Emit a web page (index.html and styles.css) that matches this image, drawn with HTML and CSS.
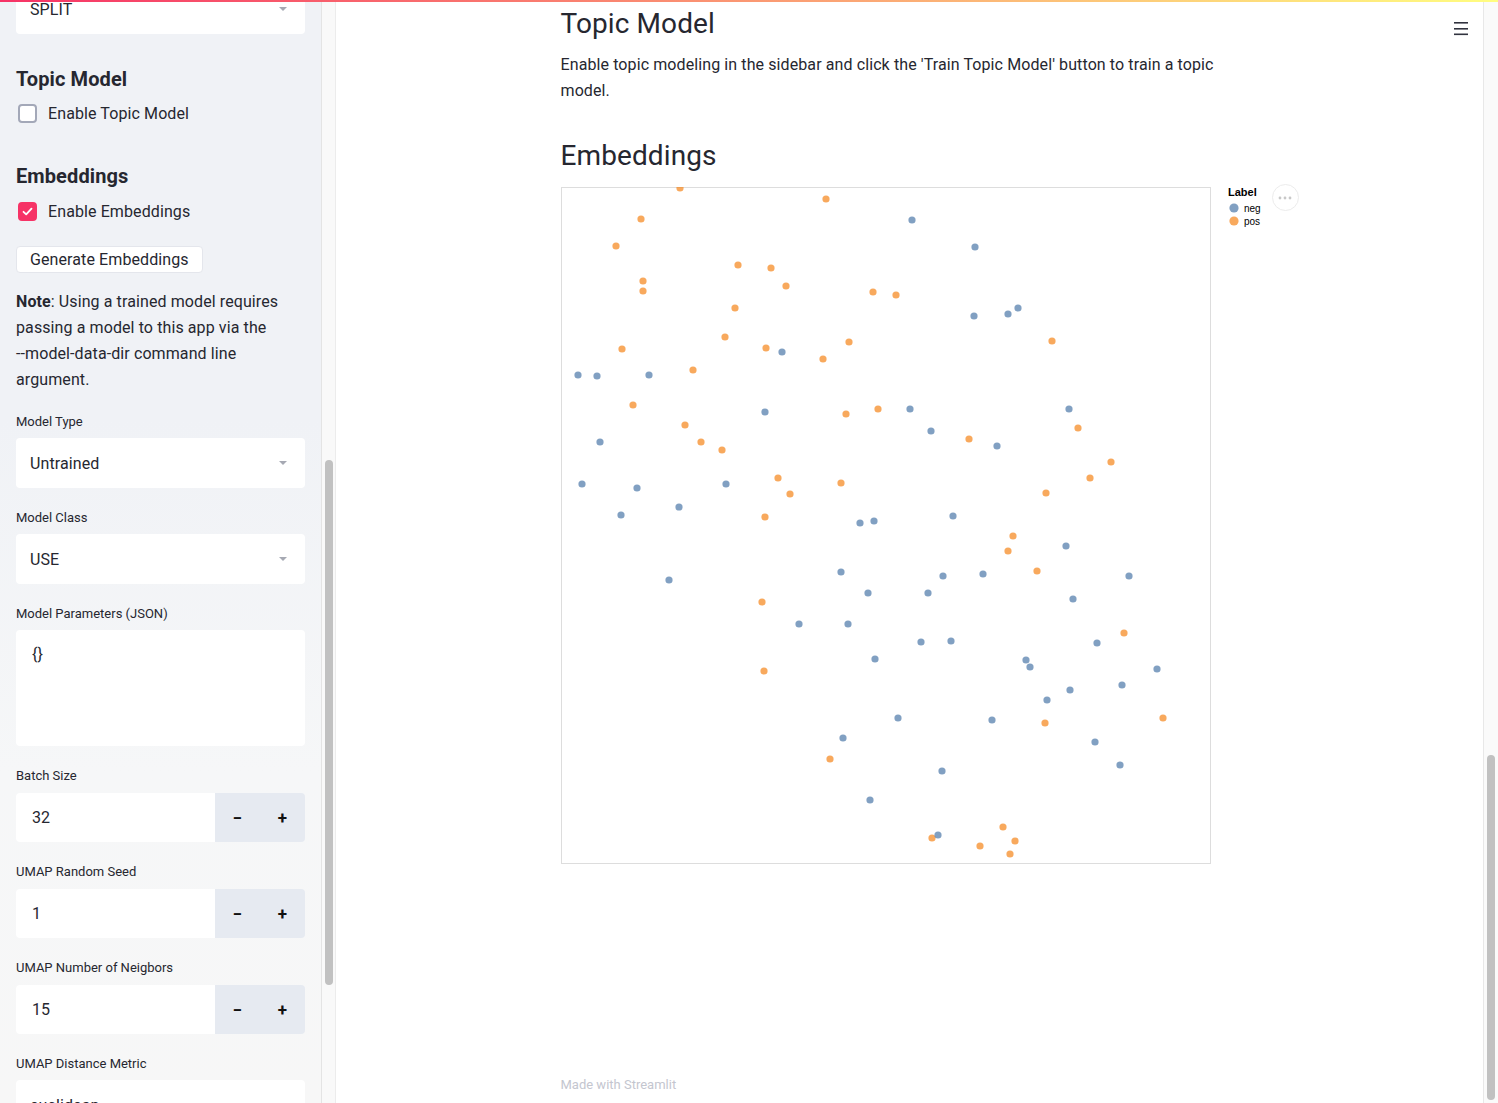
FILE: index.html
```html
<!DOCTYPE html>
<html>
<head>
<meta charset="utf-8">
<link rel="stylesheet" href="styles.css">
</head>
<body>
<div class="topbar"></div>
<aside class="sidebar">
  <div class="sidebar-content">
    <div class="sb-inner">
      <div class="select"><span>SPLIT</span><span class="caret"></span></div>

      <h3 class="sb-h3 first-h3">Topic Model</h3>
      <div class="check-row"><span class="box"></span><span>Enable Topic Model</span></div>

      <h3 class="sb-h3 second-h3">Embeddings</h3>
      <div class="check-row checked-row"><span class="box checked"><svg width="13" height="13" viewBox="0 0 13 13"><path d="M2.5 6.8 L5.2 9.4 L10.5 3.6" fill="none" stroke="#fff" stroke-width="1.8" stroke-linecap="round" stroke-linejoin="round"/></svg></span><span>Enable Embeddings</span></div>

      <div class="btn-row"><button class="btn">Generate Embeddings</button></div>

      <p class="note"><strong>Note</strong>: Using a trained model requires passing a model to this app via the <span class="nowrap">--model-data-dir</span> command line argument.</p>

      <div class="label first-label">Model Type</div>
      <div class="select"><span>Untrained</span><span class="caret"></span></div>

      <div class="label">Model Class</div>
      <div class="select"><span>USE</span><span class="caret"></span></div>

      <div class="label">Model Parameters (JSON)</div>
      <div class="textarea">{}</div>

      <div class="label num-label">Batch Size</div>
      <div class="number"><div class="num-field">32</div><div class="num-steps"><span>&minus;</span><span>+</span></div></div>

      <div class="label num-label">UMAP Random Seed</div>
      <div class="number"><div class="num-field">1</div><div class="num-steps"><span>&minus;</span><span>+</span></div></div>

      <div class="label num-label">UMAP Number of Neigbors</div>
      <div class="number"><div class="num-field">15</div><div class="num-steps"><span>&minus;</span><span>+</span></div></div>

      <div class="label">UMAP Distance Metric</div>
      <div class="select"><span>euclidean</span><span class="caret"></span></div>
    </div>
  </div>
  <div class="sb-track"><div class="sb-thumb"></div></div>
</aside>

<main class="main">
  <div class="hamburger">
    <svg width="16" height="16" viewBox="0 0 16 16"><g stroke="#31333f" stroke-width="1.6"><line x1="1" y1="2.8" x2="15" y2="2.8"/><line x1="1" y1="8.8" x2="15" y2="8.8"/><line x1="1" y1="14.3" x2="15" y2="14.3"/></g></svg>
  </div>
  <div class="block">
    <h2 class="h2 title">Topic Model</h2>
    <p class="para">Enable topic modeling in the sidebar and click the 'Train Topic Model' button to train a topic model.</p>
    <h2 class="h2 emb">Embeddings</h2>
    <div class="chart-wrap">
      <svg class="chart" width="745" height="678" viewBox="0 0 745 678">
        <rect x="0.5" y="0.5" width="649" height="676" fill="#fff" stroke="#dddddd"/>
        <g fill="#f58518" fill-opacity="0.7">
          <circle cx="119" cy="1" r="3.6"/><circle cx="265" cy="12" r="3.6"/><circle cx="80" cy="32" r="3.6"/><circle cx="55" cy="59" r="3.6"/>
          <circle cx="177" cy="78" r="3.6"/><circle cx="210" cy="81" r="3.6"/><circle cx="82" cy="94" r="3.6"/><circle cx="82" cy="104" r="3.6"/>
          <circle cx="225" cy="99" r="3.6"/><circle cx="312" cy="105" r="3.6"/><circle cx="335" cy="108" r="3.6"/><circle cx="174" cy="121" r="3.6"/>
          <circle cx="164" cy="150" r="3.6"/><circle cx="61" cy="162" r="3.6"/><circle cx="205" cy="161" r="3.6"/><circle cx="288" cy="155" r="3.6"/>
          <circle cx="262" cy="172" r="3.6"/><circle cx="491" cy="154" r="3.6"/><circle cx="132" cy="183" r="3.6"/><circle cx="72" cy="218" r="3.6"/>
          <circle cx="285" cy="227" r="3.6"/><circle cx="317" cy="222" r="3.6"/><circle cx="124" cy="238" r="3.6"/><circle cx="140" cy="255" r="3.6"/>
          <circle cx="161" cy="263" r="3.6"/><circle cx="408" cy="252" r="3.6"/><circle cx="517" cy="241" r="3.6"/><circle cx="550" cy="275" r="3.6"/>
          <circle cx="217" cy="291" r="3.6"/><circle cx="229" cy="307" r="3.6"/><circle cx="280" cy="296" r="3.6"/><circle cx="529" cy="291" r="3.6"/>
          <circle cx="485" cy="306" r="3.6"/><circle cx="204" cy="330" r="3.6"/><circle cx="452" cy="349" r="3.6"/><circle cx="447" cy="364" r="3.6"/>
          <circle cx="476" cy="384" r="3.6"/><circle cx="201" cy="415" r="3.6"/><circle cx="563" cy="446" r="3.6"/><circle cx="203" cy="484" r="3.6"/>
          <circle cx="484" cy="536" r="3.6"/><circle cx="602" cy="531" r="3.6"/><circle cx="269" cy="572" r="3.6"/><circle cx="442" cy="640" r="3.6"/>
          <circle cx="454" cy="654" r="3.6"/><circle cx="371" cy="651" r="3.6"/><circle cx="419" cy="659" r="3.6"/><circle cx="449" cy="667" r="3.6"/>
        </g>
        <g fill="#4c78a8" fill-opacity="0.7">
          <circle cx="351" cy="33" r="3.6"/><circle cx="414" cy="60" r="3.6"/><circle cx="413" cy="129" r="3.6"/><circle cx="447" cy="127" r="3.6"/>
          <circle cx="457" cy="121" r="3.6"/><circle cx="221" cy="165" r="3.6"/><circle cx="17" cy="188" r="3.6"/><circle cx="36" cy="189" r="3.6"/>
          <circle cx="88" cy="188" r="3.6"/><circle cx="204" cy="225" r="3.6"/><circle cx="349" cy="222" r="3.6"/><circle cx="508" cy="222" r="3.6"/>
          <circle cx="370" cy="244" r="3.6"/><circle cx="436" cy="259" r="3.6"/><circle cx="39" cy="255" r="3.6"/><circle cx="21" cy="297" r="3.6"/>
          <circle cx="76" cy="301" r="3.6"/><circle cx="165" cy="297" r="3.6"/><circle cx="118" cy="320" r="3.6"/><circle cx="60" cy="328" r="3.6"/>
          <circle cx="299" cy="336" r="3.6"/><circle cx="313" cy="334" r="3.6"/><circle cx="392" cy="329" r="3.6"/><circle cx="505" cy="359" r="3.6"/>
          <circle cx="108" cy="393" r="3.6"/><circle cx="280" cy="385" r="3.6"/><circle cx="382" cy="389" r="3.6"/><circle cx="422" cy="387" r="3.6"/>
          <circle cx="568" cy="389" r="3.6"/><circle cx="307" cy="406" r="3.6"/><circle cx="367" cy="406" r="3.6"/><circle cx="512" cy="412" r="3.6"/>
          <circle cx="238" cy="437" r="3.6"/><circle cx="287" cy="437" r="3.6"/><circle cx="360" cy="455" r="3.6"/><circle cx="390" cy="454" r="3.6"/>
          <circle cx="536" cy="456" r="3.6"/><circle cx="314" cy="472" r="3.6"/><circle cx="465" cy="473" r="3.6"/><circle cx="469" cy="480" r="3.6"/>
          <circle cx="596" cy="482" r="3.6"/><circle cx="561" cy="498" r="3.6"/><circle cx="509" cy="503" r="3.6"/><circle cx="486" cy="513" r="3.6"/>
          <circle cx="337" cy="531" r="3.6"/><circle cx="431" cy="533" r="3.6"/><circle cx="282" cy="551" r="3.6"/><circle cx="534" cy="555" r="3.6"/>
          <circle cx="559" cy="578" r="3.6"/><circle cx="381" cy="584" r="3.6"/><circle cx="309" cy="613" r="3.6"/><circle cx="377" cy="648" r="3.6"/>
        </g>
        <g class="legend">
          <text x="667" y="9" class="leg-title">Label</text>
          <circle cx="673" cy="21" r="4.6" fill="#4c78a8" fill-opacity="0.7"/>
          <text x="683" y="25" class="leg-item">neg</text>
          <circle cx="673" cy="34" r="4.6" fill="#f58518" fill-opacity="0.7"/>
          <text x="683" y="38" class="leg-item">pos</text>
        </g>
      </svg>
      <div class="menu-btn"><svg width="14" height="4" viewBox="0 0 14 4"><g fill="#c8c8c8"><circle cx="2" cy="2" r="1.4"/><circle cx="7" cy="2" r="1.4"/><circle cx="12" cy="2" r="1.4"/></g></svg></div>
    </div>
    <div class="footer">Made with Streamlit</div>
  </div>
</main>

<div class="page-track"><div class="page-thumb"></div></div>
</body>
</html>
```

FILE: styles.css
```css
* { box-sizing: border-box; }

html, body {
  margin: 0;
  height: 100%;
  overflow: hidden;
}

body {
  font-family: Roboto, "Liberation Sans", sans-serif;
  letter-spacing: 0.1px;
  color: #262730;
  display: flex;
  width: 1498px;
  height: 1103px;
  position: relative;
  background: #fff;
}

.nowrap { white-space: nowrap; }

.topbar {
  position: absolute;
  top: 0;
  left: 0;
  right: 0;
  height: 2px;
  background: linear-gradient(90deg, #f63366, #fffd80);
  z-index: 10;
}

/* Sidebar */
.sidebar {
  width: 336px;
  flex: none;
  display: flex;
  height: 100%;
}

.sidebar-content {
  width: 321px;
  flex: none;
  padding: 0 16px;
  overflow: hidden;
  background: linear-gradient(180deg, #f0f2f6 0%, #f0f2f6 38%, #f6f7f8 70%, #f7f7f7 100%);
}

.sb-inner {
  margin-top: -16px;
  display: flex;
  flex-direction: column;
}

.select {
  height: 50px;
  background: #fff;
  border-radius: 4px;
  display: flex;
  align-items: center;
  justify-content: space-between;
  padding: 0 14px;
  font-size: 16px;
  flex: none;
}

.caret {
  width: 0;
  height: 0;
  border-left: 4px solid transparent;
  border-right: 4px solid transparent;
  border-top: 4px solid #a6a9b3;
  margin-right: 4px;
}

.sb-h3 {
  font-size: 20px;
  font-weight: 700;
  line-height: 28px;
  margin: 0;
}

.first-h3 { margin-top: 31px; }
.second-h3 { margin-top: 37px; }

.check-row {
  display: flex;
  align-items: center;
  height: 24px;
  margin-top: 8px;
  font-size: 16px;
}

.checked-row { margin-top: 9px; }

.box {
  width: 19px;
  height: 19px;
  border: 2px solid #a3a8b8;
  border-radius: 4px;
  margin-left: 2px;
  margin-right: 11px;
  display: flex;
  align-items: center;
  justify-content: center;
  background: #fff;
}

.box.checked {
  background: #f63366;
  border-color: #f63366;
}

.btn-row {
  margin-top: 23px;
  display: flex;
}

.btn {
  height: 27px;
  padding: 0 13px;
  background: #fff;
  border: 1px solid #e4e6ec;
  border-radius: 4px;
  font-family: inherit;
  letter-spacing: inherit;
  font-size: 16px;
  color: #262730;
}

.note {
  margin: 16px 0 0;
  font-size: 16px;
  line-height: 26px;
}

.note strong { font-weight: 700; }

.label {
  font-size: 13px;
  line-height: 20px;
  letter-spacing: 0;
  margin: 20px 0 6px;
}

.first-label { margin-top: 19px; }
.num-label { margin-bottom: 7px; }

.textarea {
  height: 116px;
  background: #fff;
  border-radius: 4px;
  padding: 14px 16px;
  font-size: 16px;
  line-height: 22px;
}

.number {
  height: 49px;
  display: flex;
  flex: none;
}

.num-field {
  flex: 1;
  background: #fff;
  border-radius: 4px 0 0 4px;
  padding-left: 16px;
  display: flex;
  align-items: center;
  font-size: 16px;
}

.num-steps {
  width: 90px;
  background: #e6eaf1;
  border-radius: 0 4px 4px 0;
  display: flex;
}

.num-steps span {
  flex: 1;
  display: flex;
  align-items: center;
  justify-content: center;
  font-size: 17px;
  font-weight: 700;
  color: #111;
}

.sb-track {
  width: 15px;
  flex: none;
  background: #f9f9f9;
  border-left: 1px solid #e4e4e4;
  border-right: 1px solid #ececec;
  padding-top: 460px;
}

.sb-thumb {
  width: 8px;
  height: 525px;
  margin-left: 3px;
  border-radius: 4px;
  background: #c1c1c1;
}

/* Main */
.main {
  width: 1147px;
  flex: none;
  height: 100%;
  position: relative;
  display: flex;
  justify-content: center;
}

.hamburger {
  position: absolute;
  top: 20px;
  right: 14px;
  width: 16px;
  height: 16px;
}

.hamburger svg { display: block; }

.block {
  width: 698px;
  height: 100%;
  display: flex;
  flex-direction: column;
}

.h2 {
  font-size: 28px;
  font-weight: 400;
  line-height: 40px;
  margin: 0;
  color: #262730;
}

.title { margin-top: 4px; }
.emb { margin-top: 32px; }

.para {
  margin: 8px 0 0;
  font-size: 16px;
  line-height: 26px;
}

.chart-wrap {
  margin-top: 11px;
  position: relative;
  width: 745px;
  height: 678px;
}

.chart { display: block; }

.leg-title {
  font-family: "Liberation Sans", Arial, sans-serif;
  font-size: 11px;
  font-weight: 700;
  letter-spacing: 0;
  fill: #000;
}

.leg-item {
  font-family: "Liberation Sans", Arial, sans-serif;
  font-size: 10px;
  letter-spacing: 0;
  fill: #000;
}

.menu-btn {
  position: absolute;
  left: 711px;
  top: -3px;
  width: 27px;
  height: 27px;
  border-radius: 50%;
  border: 1px solid #ececec;
  background: #fff;
  display: flex;
  align-items: center;
  justify-content: center;
}

.menu-btn svg { display: block; }

.footer {
  margin-top: auto;
  padding-bottom: 10px;
  font-size: 13px;
  line-height: 16px;
  letter-spacing: 0;
  color: #c4c6cf;
}

/* Page scrollbar */
.page-track {
  width: 15px;
  flex: none;
  height: 100%;
  background: #fafafa;
  border-left: 1px solid #e8e8e8;
  padding-top: 755px;
}

.page-thumb {
  width: 8px;
  height: 345px;
  margin-left: 3px;
  border-radius: 4px;
  background: #c1c1c1;
}
```
